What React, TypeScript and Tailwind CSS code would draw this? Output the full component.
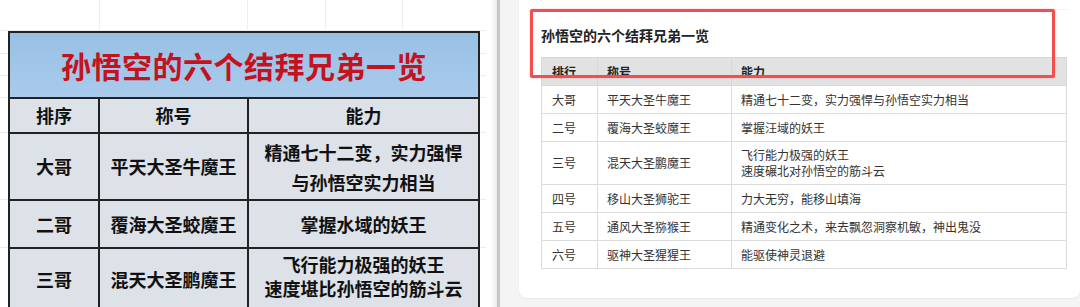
import React from "react";

const leftRows = [
  { rank: "大哥", name: "平天大圣牛魔王", ability: ["精通七十二变，实力强悍", "与孙悟空实力相当"], h: "h-[67px]", cell: "leading-[30px] align-middle" },
  { rank: "二哥", name: "覆海大圣蛟魔王", ability: ["掌握水域的妖王"], h: "h-[48px]", cell: "leading-[30px] align-middle" },
  { rank: "三哥", name: "混天大圣鹏魔王", ability: ["飞行能力极强的妖王", "速度堪比孙悟空的筋斗云"], h: "h-[62px]", cell: "leading-[24px] align-top pt-[3px]" },
];

const rightRows = [
  { rank: "大哥", name: "平天大圣牛魔王", ability: ["精通七十二变，实力强悍与孙悟空实力相当"] },
  { rank: "二号", name: "覆海大圣蛟魔王", ability: ["掌握汪域的妖王"] },
  { rank: "三号", name: "混天大圣鹏魔王", ability: ["飞行能力极强的妖王", "速度碾北对孙悟空的筋斗云"] },
  { rank: "四号", name: "移山大圣狮驼王", ability: ["力大无穷，能移山填海"] },
  { rank: "五号", name: "通风大圣猕猴王", ability: ["精通变化之术，来去飘忽洞察机敏，神出鬼没"] },
  { rank: "六号", name: "驱神大圣猩猩王", ability: ["能驱使神灵退避"] },
];

const cjk = "font-['Noto_Sans_CJK_SC','Noto_Sans',sans-serif]";

function SheetGrid() {
  // faint spreadsheet gridlines behind the pasted table image
  const ys = [30, 53, 75, 97, 132, 199, 247];
  const xs = [99, 247, 325, 402];
  return (
    <svg className="absolute inset-0" width="490" height="307">
      {ys.map((y) => (
        <line key={y} x1="0" x2="486" y1={y + 0.5} y2={y + 0.5} stroke="#ececec" strokeWidth="1" />
      ))}
      {xs.map((x) => (
        <line key={x} x1={x + 0.5} x2={x + 0.5} y1="0" y2="31" stroke="#efefef" strokeWidth="1" />
      ))}
    </svg>
  );
}

function LeftTable() {
  return (
    <div className="relative w-[490px] h-full bg-white shrink-0">
      <SheetGrid />
      <table className={`relative ml-[8px] mt-[31px] w-[472px] border-collapse table-fixed ${cjk}`}>
        <colgroup>
          <col className="w-[90px]" />
          <col className="w-[149px]" />
          <col />
        </colgroup>
        <tbody>
          <tr className="h-[66px]">
            <td
              colSpan={3}
              className="border-2 border-[#222] bg-gradient-to-b from-[#98c0e5] to-[#a9cbec] text-center text-[30px] font-bold text-[#c4121f] tracking-[0.5px]"
            >
              孙悟空的六个结拜兄弟一览
            </td>
          </tr>
          <tr className="h-[35px] bg-[#dde1e8] text-[18px] font-bold text-[#111]">
            <td className="border-2 border-[#222] text-center">排序</td>
            <td className="border-2 border-[#222] text-center">称号</td>
            <td className="border-2 border-[#222] text-center">能力</td>
          </tr>
          {leftRows.map((r) => (
            <tr key={r.rank} className={`${r.h} bg-[#dde1e8] text-[18px] font-bold text-[#111]`}>
              <td className="border-2 border-[#222] text-center">{r.rank}</td>
              <td className="border-2 border-[#222] text-center">{r.name}</td>
              <td className={`border-2 border-[#222] text-center ${r.cell}`}>
                {r.ability.map((a) => (
                  <div key={a}>{a}</div>
                ))}
              </td>
            </tr>
          ))}
        </tbody>
      </table>
    </div>
  );
}

function RightCard() {
  return (
    <div className="relative flex-1 h-full bg-[#f4f4f4] pl-[19px] pb-[9px]">
      <div className={`h-full bg-white rounded-b-lg shadow-[0_1px_2px_rgba(0,0,0,0.06)] pl-[22px] pr-[13px] pt-[9px] ${cjk}`}>
        <div className="h-px bg-[#f0f0f0]" />
        <div className="mt-[15px] h-[20px] text-[14px] leading-[20px] font-bold text-[#222]">孙悟空的六个结拜兄弟一览</div>
        <table className="mt-[12px] w-[526px] border-collapse table-fixed text-[12px] text-[#333]">
          <colgroup>
            <col className="w-[56px]" />
            <col className="w-[134px]" />
            <col />
          </colgroup>
          <thead>
            <tr className="h-[28px] bg-[#e2e2e2] font-bold text-[#222]">
              <th className="border border-[#d8d8d8] pl-[10px] text-left font-bold">排行</th>
              <th className="border border-[#d8d8d8] pl-[9px] text-left font-bold">称号</th>
              <th className="border border-[#d8d8d8] pl-[9px] text-left font-bold">能力</th>
            </tr>
          </thead>
          <tbody>
            {rightRows.map((r) => (
              <tr key={r.rank} className={r.ability.length > 1 ? "h-[43px]" : "h-[28px]"}>
                <td className="border border-[#dcdcdc] pl-[10px]">{r.rank}</td>
                <td className="border border-[#dcdcdc] pl-[9px]">{r.name}</td>
                <td className="border border-[#dcdcdc] pl-[9px] leading-[16px]">
                  {r.ability.map((a) => (
                    <div key={a}>{a}</div>
                  ))}
                </td>
              </tr>
            ))}
          </tbody>
        </table>
      </div>
      {/* red highlight box drawn over the card */}
      <div className="absolute left-[30px] top-[9px] w-[525px] h-[69px] border-[3px] border-[#f24e4e] rounded-[2px] shadow-[0_0_2px_rgba(242,78,78,0.4)]" />
    </div>
  );
}

export default function App() {
  return (
    <div className="flex w-[1080px] h-[307px] overflow-hidden bg-white">
      <LeftTable />
      <div className="w-[7px] h-full bg-gradient-to-r from-white to-[#ebebeb] shrink-0" />
      <div className="w-[3px] h-full bg-[#c9c6c2] shrink-0" />
      <RightCard />
    </div>
  );
}
